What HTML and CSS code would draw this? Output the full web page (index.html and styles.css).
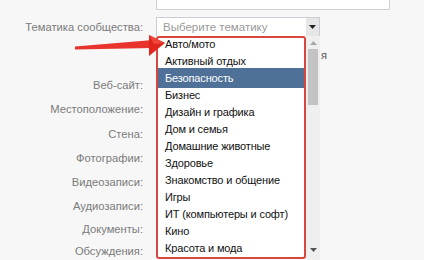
FILE: index.html
```html
<!DOCTYPE html>
<html lang="ru">
<head>
<meta charset="utf-8">
<link rel="stylesheet" href="styles.css">
</head>
<body>
<div class="page">
  <div class="form">
    <div class="row row-top">
      <div class="label"></div>
      <div class="field"><div class="top-input"></div></div>
    </div>
    <div class="row row-theme">
      <div class="label">Тематика сообщества:</div>
      <div class="field">
        <div class="select">
          <span class="placeholder">Выберите тематику</span>
          <span class="select-btn"><svg width="7" height="4" viewBox="0 0 7 4"><path d="M0 0H7L3.5 4Z" fill="#222"/></svg></span>
        </div>
      </div>
    </div>
    <div class="row row-sub"><div class="label"></div><div class="field"><span class="hint">я</span></div></div>
    <div class="row r1"><div class="label">Веб-сайт:</div></div>
    <div class="row r2"><div class="label">Местоположение:</div></div>
    <div class="row r3"><div class="label">Стена:</div></div>
    <div class="row r4"><div class="label">Фотографии:</div></div>
    <div class="row r5"><div class="label">Видеозаписи:</div></div>
    <div class="row r6"><div class="label">Аудиозаписи:</div></div>
    <div class="row r7"><div class="label">Документы:</div></div>
    <div class="row r8"><div class="label">Обсуждения:</div></div>
  </div>

  <div class="dropdown">
    <ul class="options">
      <li>Авто/мото</li>
      <li>Активный отдых</li>
      <li class="active">Безопасность</li>
      <li>Бизнес</li>
      <li>Дизайн и графика</li>
      <li>Дом и семья</li>
      <li>Домашние животные</li>
      <li>Здоровье</li>
      <li>Знакомство и общение</li>
      <li>Игры</li>
      <li>ИТ (компьютеры и софт)</li>
      <li>Кино</li>
      <li>Красота и мода</li>
    </ul>
    <div class="scrollbar">
      <svg class="sb-arrow" width="7" height="4" viewBox="0 0 7 4"><path d="M0 4H7L3.5 0Z" fill="#a8a8a8"/></svg>
      <div class="sb-track"><div class="sb-thumb"></div></div>
      <svg class="sb-arrow" width="7" height="4" viewBox="0 0 7 4"><path d="M0 0H7L3.5 4Z" fill="#555"/></svg>
    </div>
  </div>

  <div class="highlight-box"></div>

  <svg class="pointer" width="100" height="26" viewBox="0 0 100 26">
    <path d="M0 12.5 L78 6 L78 14 L0 15.5 Z" fill="#e8342c"/>
    <path d="M74 1 L90 9 L74 22 Z" fill="#e0251d"/>
    <path d="M74 1 L90 9 L79 10 Z" fill="#ef463c"/>
  </svg>
</div>
</body>
</html>
```

FILE: styles.css
```css
* { box-sizing: border-box; }
html, body { margin: 0; padding: 0; }
body {
  background: #f7f7f7;
  font-family: "Liberation Sans", Arial, sans-serif;
  width: 424px;
  height: 260px;
  overflow: hidden;
}
.page {
  position: relative;
  width: 424px;
  height: 260px;
}
.form {
  display: flex;
  flex-direction: column;
}
.row {
  display: grid;
  grid-template-columns: 143px 1fr;
  column-gap: 13px;
  align-items: center;
}
.label {
  text-align: right;
  color: #7b7b7b;
  font-size: 11.2px;
}
.row-top { height: 17px; align-items: start; }
.top-input {
  width: 234px;
  height: 10px;
  background: #fff;
  border: 1px solid #d0d0d0;
  border-top: none;
}
.row-theme { height: 20px; }
.select {
  width: 164px;
  height: 20px;
  background: #fff;
  border: 1px solid #c9ced6;
  display: flex;
  align-items: center;
  justify-content: space-between;
}
.placeholder {
  color: #9a9a9a;
  font-size: 11.5px;
  padding-left: 6px;
}
.select-btn {
  width: 13px;
  height: 18px;
  background: #e6e6e6;
  display: flex;
  align-items: center;
  justify-content: center;
}
.row-sub { height: 37px; align-items: start; }
.hint {
  display: block;
  margin-left: 165px;
  margin-top: 12px;
  font-size: 11px;
  color: #555;
}
.r1 { height: 22px; }
.r2 { height: 26px; }
.r3 { height: 24px; }
.r4 { height: 24px; }
.r5 { height: 24px; }
.r6 { height: 24px; }
.r7 { height: 22px; }
.r8 { height: 22px; }

.dropdown {
  position: absolute;
  left: 156px;
  top: 36px;
  width: 164px;
  height: 224px;
  display: flex;
  background: #fff;
}
.options {
  list-style: none;
  margin: 0;
  padding: 0;
  flex: 1;
}
.options li {
  height: 17px;
  line-height: 17px;
  padding-left: 9px;
  font-size: 11px;
  letter-spacing: -0.15px;
  color: #111;
  white-space: nowrap;
}
.options li.active {
  height: 20px;
  line-height: 20px;
  margin: -2px 0 -1px;
  background: #4f7198;
  color: #fff;
}
.scrollbar {
  width: 14px;
  background: #efefef;
  display: flex;
  flex-direction: column;
  align-items: center;
  padding: 5px 0 8px;
}
.sb-track {
  flex: 1;
  width: 100%;
  padding: 4px 2px 0;
}
.sb-thumb {
  height: 56px;
  background: #c3c3c3;
}
.highlight-box {
  position: absolute;
  left: 156px;
  top: 36px;
  width: 150px;
  height: 223px;
  border: 2px solid #d9463d;
  border-radius: 3px;
}
.pointer {
  position: absolute;
  left: 75px;
  top: 34px;
}
```
